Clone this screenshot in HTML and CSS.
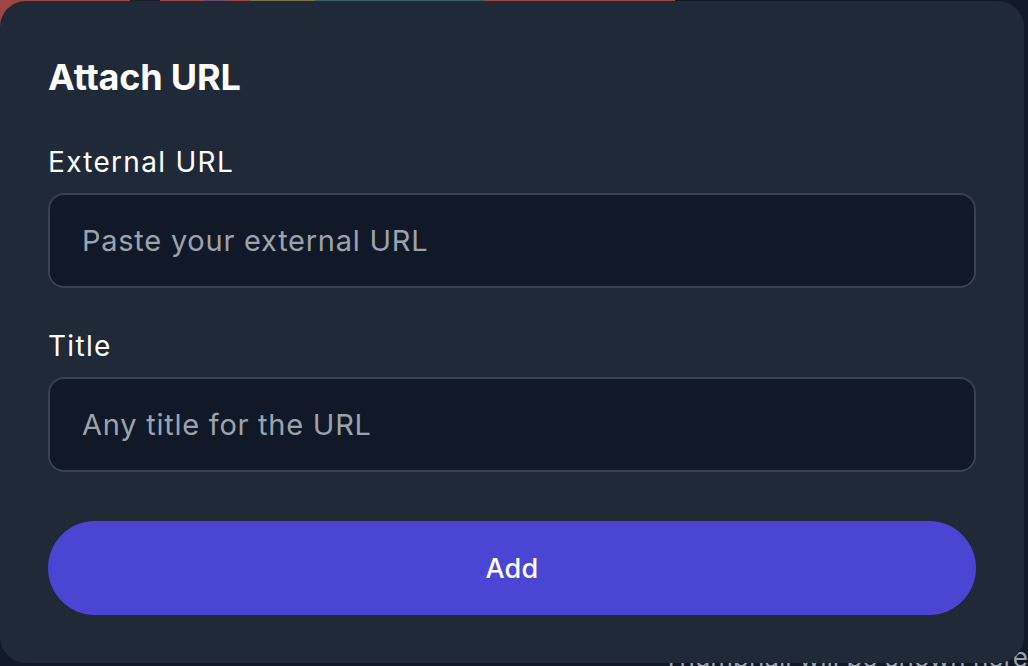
FILE: index.html
```html
<!DOCTYPE html>
<html lang="en">
<head>
<meta charset="utf-8">
<title>Attach URL</title>
<link rel="stylesheet" href="styles.css">
</head>
<body>
<div class="backdrop">
  <div class="strip">
    <span class="seg red w130"></span>
    <span class="seg dark w30"></span>
    <span class="seg red w45"></span>
    <span class="seg purple w20"></span>
    <span class="seg red w25"></span>
    <span class="seg olive w65"></span>
    <span class="seg teal w170"></span>
    <span class="seg red w190"></span>
  </div>
  <div class="behind-text">Thumbnail will be shown here</div>
</div>

<div class="modal">
  <h2 class="modal-title">Attach URL</h2>
  <div class="field">
    <label class="field-label" for="url">External URL</label>
    <input class="field-input" id="url" type="text" placeholder="Paste your external URL">
  </div>
  <div class="field">
    <label class="field-label" for="title">Title</label>
    <input class="field-input" id="title" type="text" placeholder="Any title for the URL">
  </div>
  <button class="add-btn" type="button">Add</button>
</div>
</body>
</html>
```

FILE: styles.css
```css
* { box-sizing: border-box; }

html, body {
  margin: 0;
  padding: 0;
  width: 1028px;
  height: 666px;
  overflow: hidden;
  background: #111827;
  font-family: Inter, "Noto Sans", sans-serif;
}

.backdrop {
  position: relative;
  width: 100%;
  height: 100%;
  display: flex;
  flex-direction: column;
  justify-content: space-between;
}

.strip {
  display: flex;
  height: 30px;
}

.seg { display: block; height: 100%; }
.red { background: #9e4545; }
.dark { background: #1a1f2b; }
.purple { background: #6a4a6e; }
.olive { background: #74754a; }
.teal { background: #3d6469; }
.w130 { width: 130px; }
.w30 { width: 30px; }
.w45 { width: 45px; }
.w20 { width: 20px; }
.w25 { width: 25px; }
.w65 { width: 65px; }
.w170 { width: 170px; }
.w190 { width: 190px; }

.behind-text {
  align-self: flex-end;
  margin-right: 0;
  margin-bottom: 0;
  font-size: 26px;
  line-height: 16px;
  height: 16px;
  color: #9ca3af;
  white-space: nowrap;
}

.modal {
  position: absolute;
  left: 0;
  top: 1px;
  width: 1024px;
  height: 662px;
  background: #1f2937;
  border-radius: 26px;
  padding: 48px;
  display: flex;
  flex-direction: column;
}

.modal-title {
  margin: 0 0 37px;
  font-size: 36px;
  line-height: 56px;
  font-weight: 700;
  color: #ffffff;
  letter-spacing: -0.2px;
}

.field {
  display: flex;
  flex-direction: column;
  gap: 11px;
  margin-bottom: 38px;
}

.field + .field { margin-bottom: 49px; }

.field-label {
  font-size: 28px;
  line-height: 40px;
  color: #ffffff;
  font-weight: 400;
  letter-spacing: 1.3px;
}

.field-input {
  height: 95px;
  width: 100%;
  background: #111827;
  border: 2px solid #374151;
  border-radius: 16px;
  padding: 0 32px;
  font-family: inherit;
  font-size: 29px;
  letter-spacing: 0.75px;
  color: #ffffff;
  outline: none;
}

.field-input::placeholder { color: #9ca3af; }

.add-btn {
  height: 95px;
  width: 100%;
  border: none;
  border-radius: 48px;
  background: #4a46d3;
  color: #ffffff;
  font-family: inherit;
  font-size: 27px;
  font-weight: 500;
  letter-spacing: 0.3px;
}
```
